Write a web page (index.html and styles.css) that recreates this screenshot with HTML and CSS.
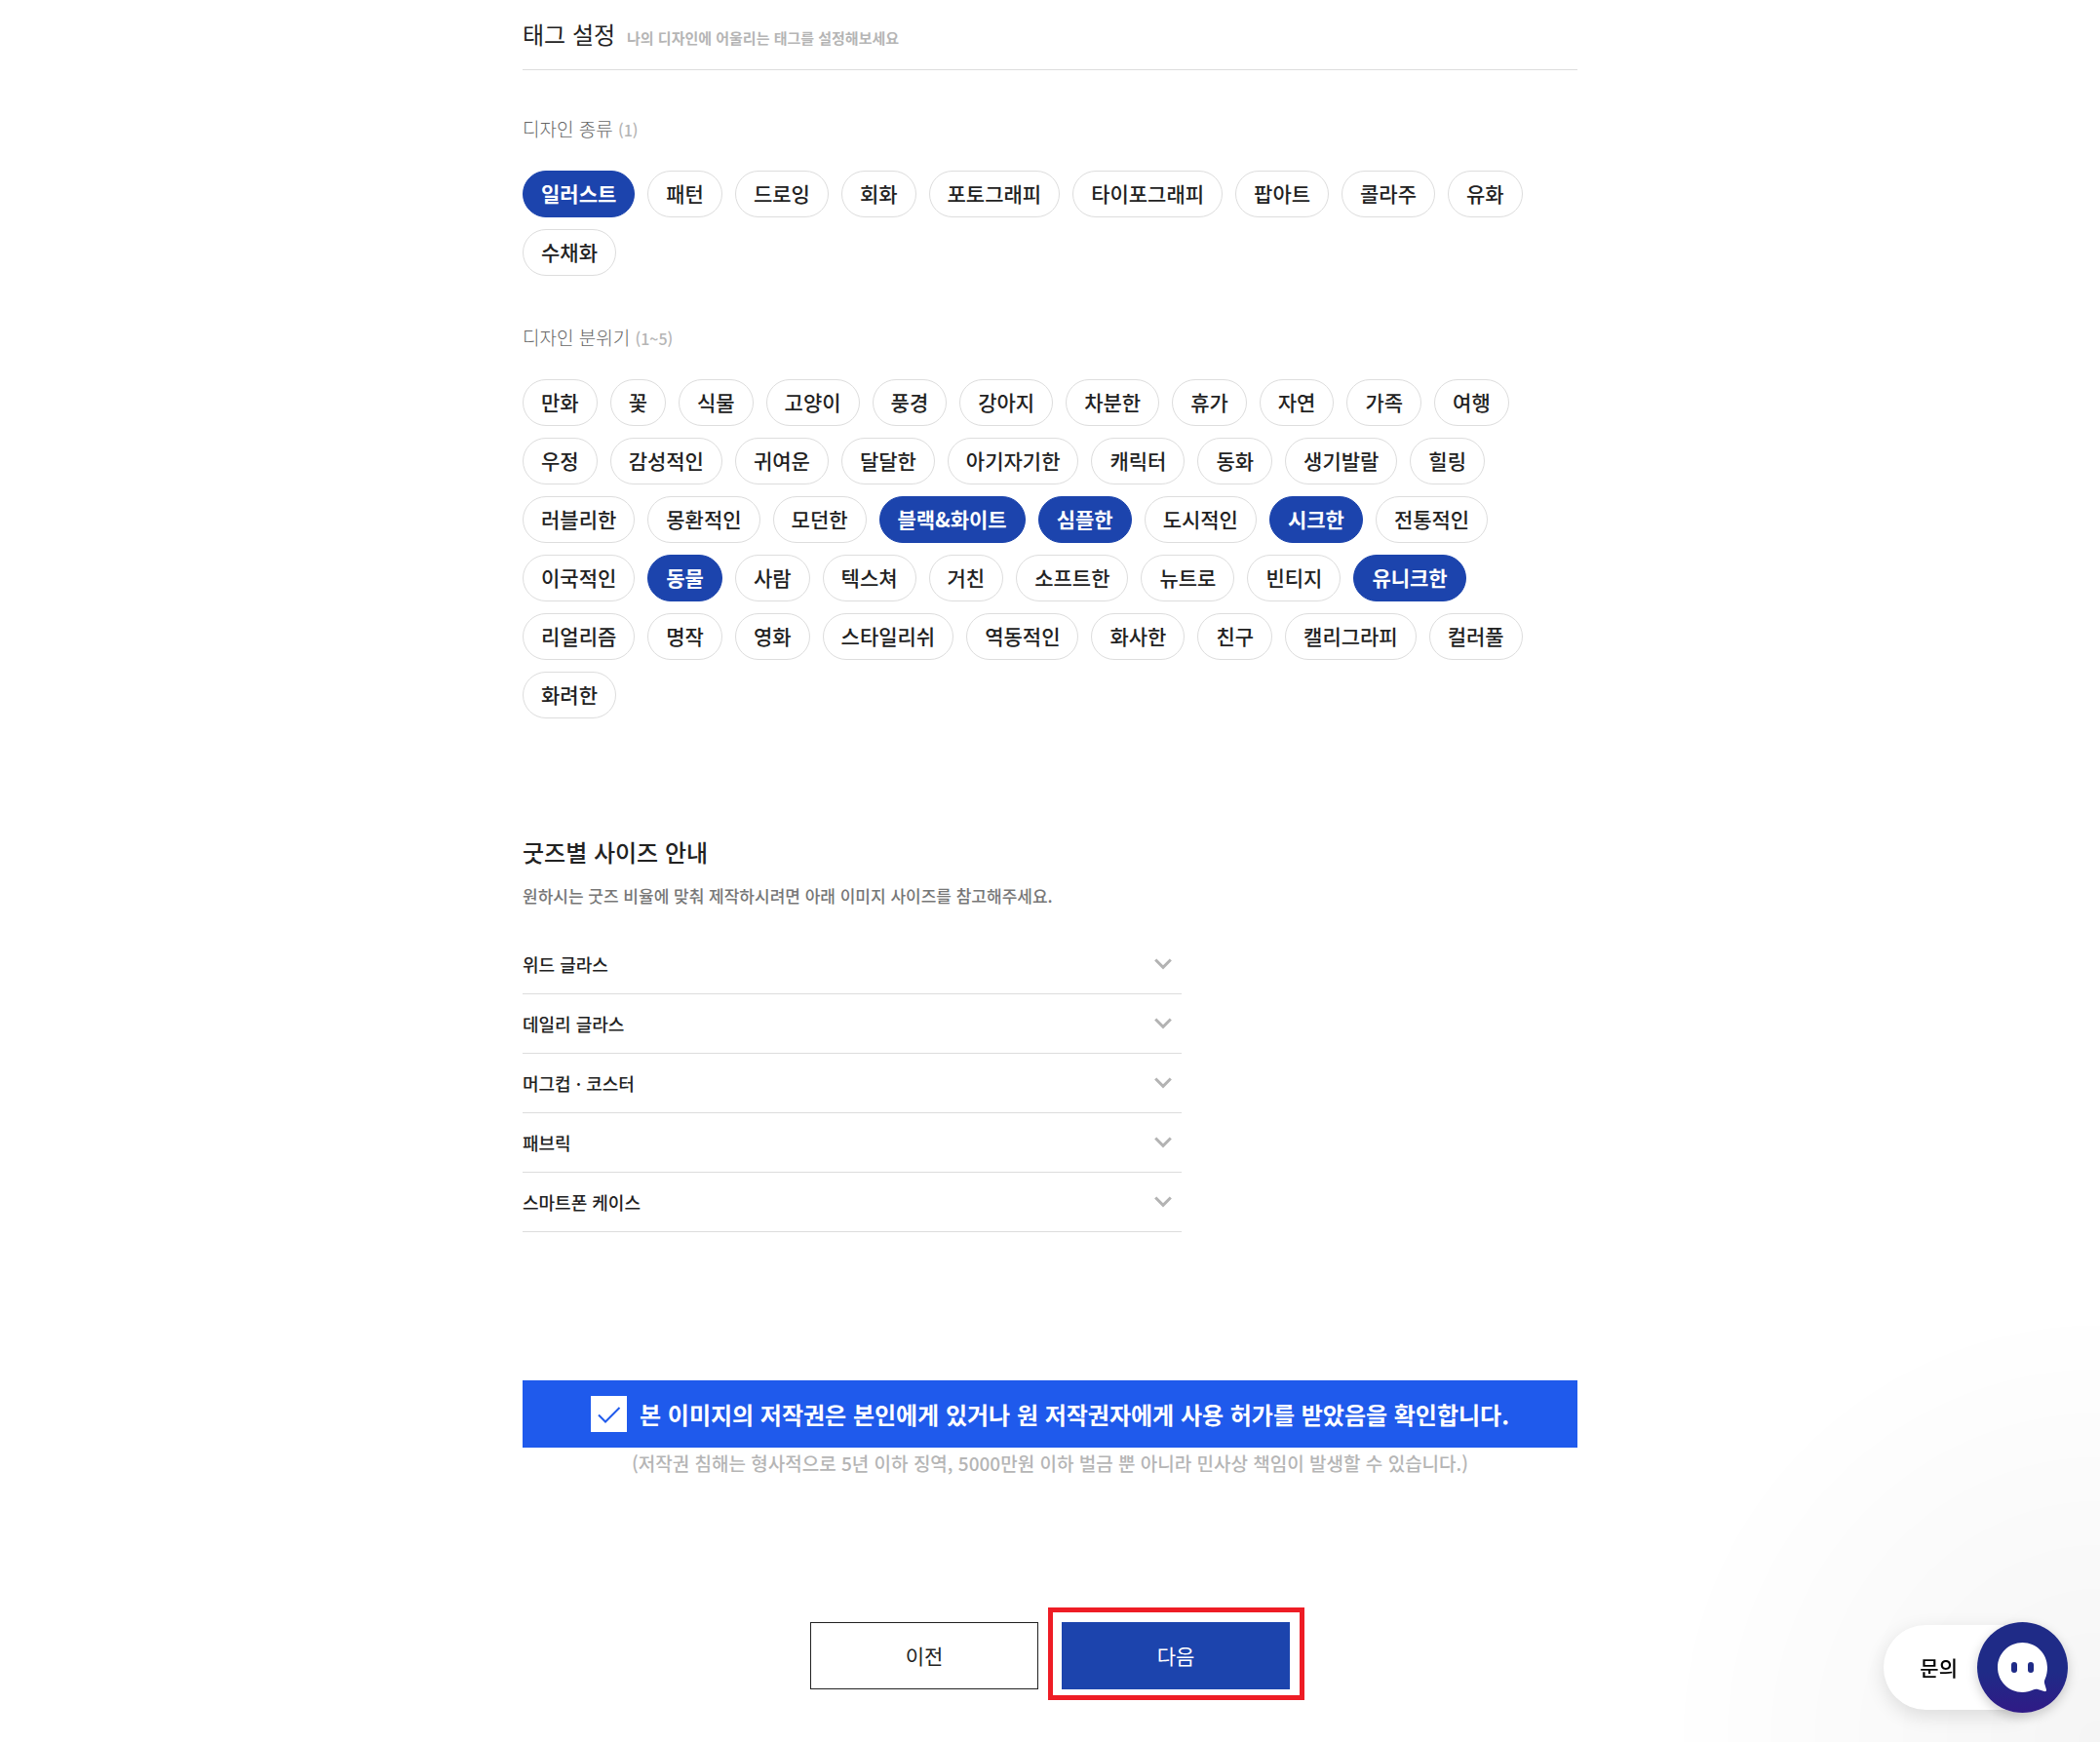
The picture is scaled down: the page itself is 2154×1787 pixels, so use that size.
FILE: index.html
```html
<!DOCTYPE html>
<html lang="ko">
<head>
  <meta charset="UTF-8">
  <meta name="viewport" content="width=device-width, initial-scale=1.0">
  <title>태그 설정</title>
  <link rel="stylesheet" href="styles.css">
</head>
<body>

  <main class="container">
    <header class="page-title">
      <h1>태그 설정</h1>
      <p>나의 디자인에 어울리는 태그를 설정해보세요</p>
    </header>

    <section class="tag-group">
      <h2>디자인 종류 <small>(1)</small></h2>
      <div class="tags" id="tags-kind"></div>
    </section>

    <section class="tag-group">
      <h2>디자인 분위기 <small>(1~5)</small></h2>
      <div class="tags" id="tags-mood"></div>
    </section>

    <section class="size-guide">
      <h2>굿즈별 사이즈 안내</h2>
      <p>원하시는 굿즈 비율에 맞춰 제작하시려면 아래 이미지 사이즈를 참고해주세요.</p>
      <div class="accordion" id="accordion"></div>
    </section>

    <form class="agree-form">
      <label class="agree" for="agree">
        <span class="check">
          <input type="checkbox" id="agree" checked>
          <svg viewBox="0 0 37 37" aria-hidden="true"><path d="M8 19.5 15 26.5 29.5 12" /></svg>
        </span>
        <span>본 이미지의 저작권은 본인에게 있거나 원 저작권자에게 사용 허가를 받았음을 확인합니다.</span>
      </label>
      <p class="notice">(저작권 침해는 형사적으로 5년 이하 징역, 5000만원 이하 벌금 뿐 아니라 민사상 책임이 발생할 수 있습니다.)</p>

      <div class="buttons">
        <button type="button" class="btn">이전</button>
        <div class="highlight">
          <button type="button" class="btn btn-next">다음</button>
        </div>
      </div>
    </form>
  </main>

  <div class="chat-shade"></div>
  <button type="button" class="chat">
    <span class="chat-label">문의</span>
    <span class="chat-icon">
      <svg viewBox="0 0 93 93" aria-hidden="true">
        <path fill="#fff" d="M46.5 21C32.4 21 21 32.4 21 46.5S32.4 72 46.5 72c4.200 0 7.500-.8 10.800-2.400 1.800-.9 3.200-1 5-.5l6.500 1.900c1.700.5 2.600-.5 2.100-2.100l-1.700-5.600c-.5-1.800-.3-3.200.5-5C71.300 54.700 72 50.700 72 46.500 72 32.400 60.600 21 46.500 21z" />
        <rect x="35" y="41" width="6" height="11" rx="3" fill="#1f2b87" />
        <rect x="52" y="41" width="6" height="11" rx="3" fill="#1f2b87" />
      </svg>
    </span>
  </button>

  <script>
    const kinds = ["일러스트", "패턴", "드로잉", "회화", "포토그래피", "타이포그래피", "팝아트", "콜라주", "유화", "수채화"];
    const moods = [
      "만화", "꽃", "식물", "고양이", "풍경", "강아지", "차분한", "휴가", "자연", "가족", "여행",
      "우정", "감성적인", "귀여운", "달달한", "아기자기한", "캐릭터", "동화", "생기발랄", "힐링",
      "러블리한", "몽환적인", "모던한", "블랙&화이트", "심플한", "도시적인", "시크한", "전통적인",
      "이국적인", "동물", "사람", "텍스쳐", "거친", "소프트한", "뉴트로", "빈티지", "유니크한",
      "리얼리즘", "명작", "영화", "스타일리쉬", "역동적인", "화사한", "친구", "캘리그라피", "컬러풀",
      "화려한"
    ];
    const goods = ["위드 글라스", "데일리 글라스", "머그컵 · 코스터", "패브릭", "스마트폰 케이스"];

    function renderTags(id, list, selected, max) {
      const box = document.getElementById(id);
      list.forEach((name) => {
        const tag = document.createElement('button');
        tag.type = 'button';
        tag.className = 'tag';
        tag.textContent = name;
        tag.setAttribute('aria-pressed', selected.includes(name));
        tag.onclick = () => {
          const on = tag.getAttribute('aria-pressed') === 'true';
          if (!on && box.querySelectorAll('[aria-pressed="true"]').length >= max) return;
          tag.setAttribute('aria-pressed', !on);
        };
        box.appendChild(tag);
      });
    }

    function renderAccordion() {
      document.getElementById('accordion').innerHTML = goods.map((name) => `
        <button type="button" class="accordion-row" aria-expanded="false">
          <span>${name}</span>
          <svg viewBox="0 0 18 12" aria-hidden="true"><path d="M1.200 1.500 9 9.300l7.800-7.800" /></svg>
        </button>
      `).join('');
    }

    renderTags('tags-kind', kinds, ["일러스트"], 1);
    renderTags('tags-mood', moods, ["블랙&화이트", "심플한", "시크한", "동물", "유니크한"], 5);
    renderAccordion();
  </script>
</body>
</html>
```
FILE: styles.css
```css
* {
  box-sizing: border-box;
}
body {
  font-family: "Noto Sans CJK KR", sans-serif;
  background-color: #fff;
  color: #222;
  margin: 0;
}
h1, h2, p {
  margin: 0;
}
button {
  font-family: inherit;
  color: inherit;
  cursor: pointer;
}
.container {
  max-width: 1082px;
  margin: 0 auto;
  padding-bottom: 55px;
}
.page-title {
  display: flex;
  align-items: baseline;
  gap: 12px;
  padding: 17px 0 18px;
  border-bottom: 1px solid #ddd;
}
.page-title h1 {
  font-size: 24px;
  font-weight: 400;
  line-height: 36px;
}
.page-title p {
  font-size: 15px;
  font-weight: 700;
  line-height: 20px;
  color: #b5b5b5;
}
.tag-group {
  margin-top: 47px;
}
.tag-group + .tag-group {
  margin-top: 50px;
}
.tag-group h2 {
  font-size: 19px;
  font-weight: 300;
  line-height: 26px;
  color: #666;
  margin-bottom: 29px;
}
.tag-group small {
  font-size: 16px;
  font-weight: 500;
  color: #b5b5b5;
}
.tags {
  display: flex;
  flex-wrap: wrap;
  gap: 12px 13px;
}
.tag {
  height: 48px;
  padding: 0 18px 2px;
  border: 1px solid #ddd;
  border-radius: 24px;
  background-color: #fff;
  font-size: 21px;
  font-weight: 500;
}
.tag[aria-pressed="true"] {
  background-color: #1c44ad;
  border-color: #1c44ad;
  color: #fff;
  font-weight: 700;
}
.size-guide {
  margin-top: 119px;
}
.size-guide h2 {
  font-size: 24px;
  font-weight: 500;
  line-height: 36px;
}
.size-guide p {
  font-size: 17px;
  font-weight: 500;
  line-height: 28px;
  color: #777;
  margin-top: 13px;
}
.accordion {
  max-width: 676px;
  margin-top: 26px;
}
.accordion-row {
  display: flex;
  justify-content: space-between;
  align-items: center;
  width: 100%;
  height: 61px;
  padding: 0 10px 0 0;
  border: none;
  border-bottom: 1px solid #ddd;
  background: none;
  font-size: 18px;
  font-weight: 500;
}
.accordion-row svg {
  width: 18px;
  height: 12px;
  fill: none;
  stroke: #b3b3b3;
  stroke-width: 3;
}
.agree-form {
  margin-top: 152px;
}
.agree {
  display: flex;
  justify-content: center;
  align-items: center;
  gap: 13px;
  min-height: 69px;
  background-color: #1f5aec;
  color: #fff;
  font-size: 24px;
  font-weight: 700;
  cursor: pointer;
}
.check {
  display: grid;
}
.check input,
.check svg {
  grid-area: 1 / 1;
  width: 37px;
  height: 37px;
  margin: 0;
}
.check input {
  appearance: none;
  background-color: #fff;
}
.check svg {
  fill: none;
  stroke: #1f5aec;
  stroke-width: 2;
  pointer-events: none;
}
.check input:not(:checked) + svg {
  visibility: hidden;
}
.notice {
  margin-top: 2px;
  font-size: 19px;
  font-weight: 500;
  line-height: 28px;
  text-align: center;
  color: #b5b5b5;
}
.buttons {
  display: flex;
  justify-content: center;
  gap: 24px;
  margin-top: 149px;
}
.btn {
  width: 234px;
  height: 69px;
  padding: 0 0 2px;
  border: 1px solid #222;
  background-color: #fff;
  font-size: 21px;
  font-weight: 400;
}
.btn-next {
  border-color: #1c44ad;
  background-color: #1c44ad;
  color: #fff;
}
.highlight {
  position: relative;
}
.highlight::after {
  content: "";
  position: absolute;
  inset: -15px -15px -11px -14px;
  border: 5px solid #ee1c25;
  pointer-events: none;
}
/* soft shade in the corner behind the chat button */
.chat-shade {
  position: fixed;
  right: 0;
  bottom: 0;
  width: 460px;
  height: 460px;
  background: radial-gradient(circle at 100% 100%, rgba(0, 0, 0, 0.04), rgba(0, 0, 0, 0) 450px);
  pointer-events: none;
}
.chat {
  position: fixed;
  right: 33px;
  bottom: 30px;
  display: flex;
  align-items: center;
  padding: 0;
  border: none;
  background: none;
  color: #000;
}
.chat-label {
  height: 87px;
  margin-right: -46px;
  padding: 0 66px 0 37px;
  border-radius: 44px 0 0 44px;
  background-color: #fff;
  box-shadow: 0 6px 20px rgba(0, 0, 0, 0.12);
  font-size: 21px;
  font-weight: 500;
  line-height: 87px;
}
.chat-icon {
  position: relative;
  width: 93px;
  height: 93px;
  border-radius: 50%;
  background: linear-gradient(#1f2b87 55%, #301a86);
  box-shadow: 0 4px 12px rgba(0, 0, 0, 0.2);
}
.chat-icon svg {
  display: block;
}
```
